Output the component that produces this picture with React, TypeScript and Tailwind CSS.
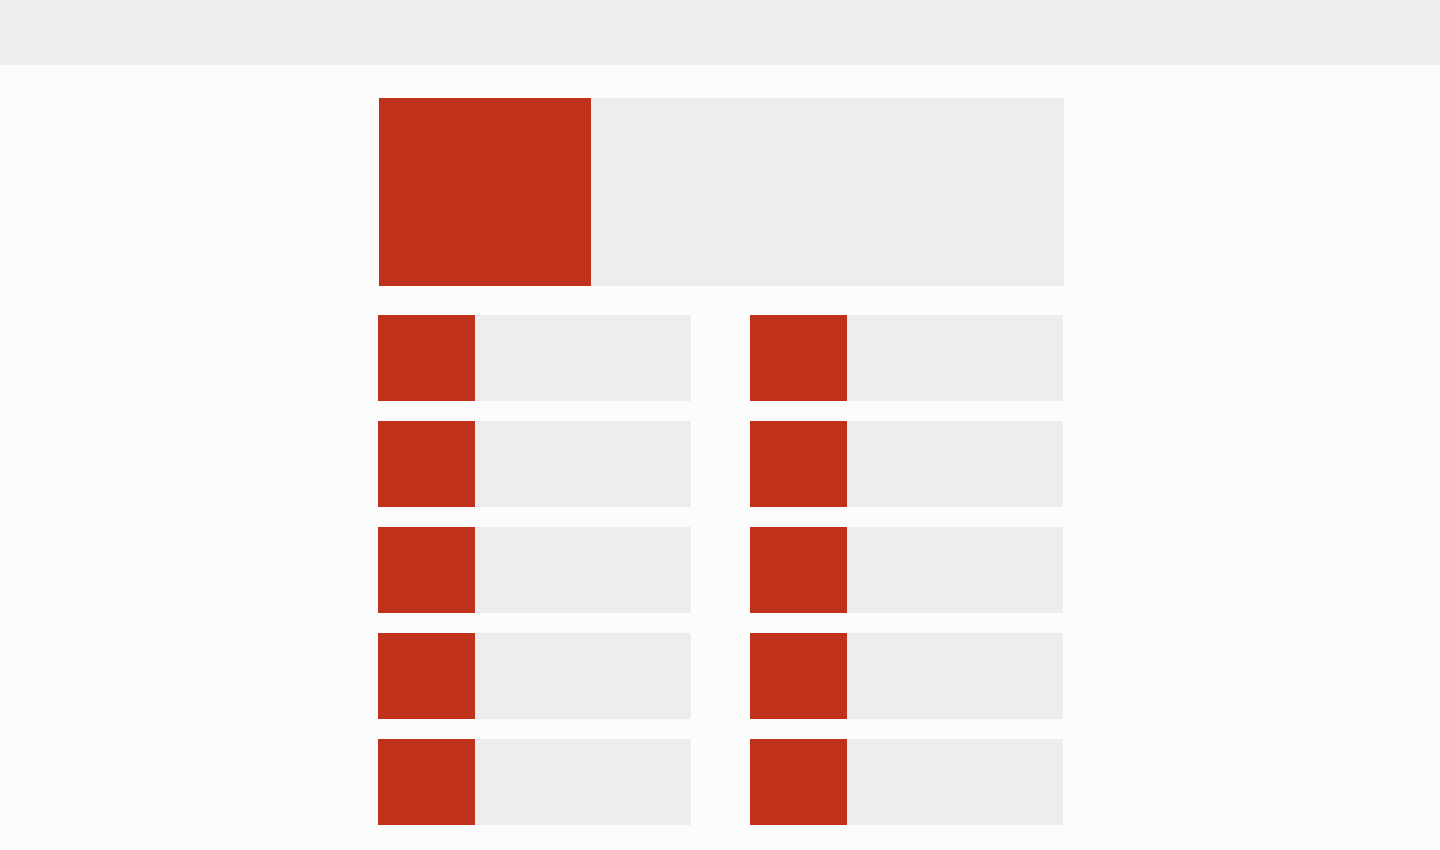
export default function App() {
  const rows = Array.from({ length: 10 })

  return (
    <div className="min-h-[850px] bg-[#fcfcfc]">
      <header className="h-[65px] bg-[#ededed]" />
      <main className="mx-auto w-[685px] pt-[33px] pb-[25px]">
        <section className="ml-px -mr-px flex h-[188px] bg-[#ededed]">
          <div className="w-[212px] bg-[#bf311b]" />
          <div className="flex-1" />
        </section>
        <section className="mt-[29px] grid grid-cols-2 gap-x-[59px] gap-y-5">
          {rows.map((_, index) => (
            <div key={index} className="flex h-[86px] bg-[#ededed]">
              <div className="w-[97px] bg-[#bf311b]" />
              <div className="flex-1" />
            </div>
          ))}
        </section>
      </main>
    </div>
  )
}
